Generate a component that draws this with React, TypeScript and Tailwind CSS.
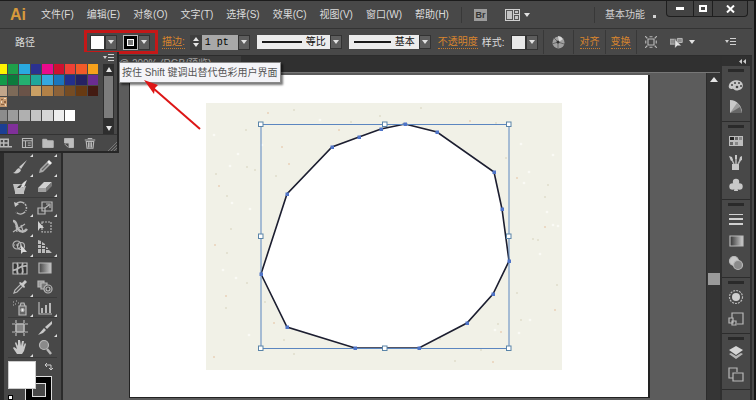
import React from "react";
import type { ReactNode } from "react";

const menus = [
  "文件(F)",
  "编辑(E)",
  "对象(O)",
  "文字(T)",
  "选择(S)",
  "效果(C)",
  "视图(V)",
  "窗口(W)",
  "帮助(H)",
];

const swatchRows = [
  ["#fff200", "#1fa04a", "#2aa9e0", "#2b3190", "#ea0a8c", "#cf1030", "#ef4136", "#f15a29", "#f7a11b"],
  ["#149a49", "#0d7a3c", "#25b070", "#1fa79b", "#35a8e0", "#1b75bc", "#232f8c", "#252262", "#6a2c91"],
  ["#c2a68a", "#7d6a58", "#6a5348", "#caa064", "#b28147", "#8c6239", "#754c24", "#683a12", "#431b12"],
];

const grays = ["#8c8c8c", "#9c9c9c", "#b0b0b0", "#c4c4c4", "#d6d6d6", "#eeeeee", "#ffffff"];

const Icon = ({ children, size = 16 }: { children?: ReactNode; size?: number }) => (
  <svg
    width={size}
    height={size}
    viewBox="0 0 16 16"
    fill="none"
    stroke="#b8b8b8"
    strokeWidth="1.2"
    aria-hidden="true"
  >
    {children}
  </svg>
);

const Caret = () => (
  <svg width="6" height="4" viewBox="0 0 6 4" fill="#e2e2e2" aria-hidden="true">
    <path d="M0 0h6L3 4z" />
  </svg>
);

const PanelMenu = () => (
  <svg width="11" height="8" viewBox="0 0 11 8" fill="#d0d0d0" aria-hidden="true">
    <path d="M0 2h4L2 5zM5 0h6v1H5zM5 3h6v1H5zM5 6h6v1H5z" />
  </svg>
);

const Separator = () => (
  <span className="h-6 w-px shrink-0 bg-[#383838]" />
);

type Tool = { name: string; more?: boolean; icon: ReactNode };

const toolGroups: Tool[][] = [
  [
    { name: "选择", icon: <path d="M4 2v11l3-3h5z" fill="#c2c2c2" stroke="none" /> },
    { name: "直接选择", more: true, icon: <path d="M4 2v11l3-3h5z" /> },
    { name: "魔棒", icon: <path d="M2 14L10 6M12 1v4M10 3h4" /> },
    { name: "套索", icon: <path d="M3 10c-3-8 12-9 11-3-1 4-8 5-11 3l1 4" /> },
  ],
  [
    { name: "钢笔", more: true, icon: <path d="M3 14l2-7 5-5 3 3-5 5zM3 14l5-5" /> },
    { name: "文字", more: true, icon: <path d="M3 5V3h10v2M8 3v10M6 13h4" /> },
    { name: "直线段", more: true, icon: <path d="M3 12L12 3" /> },
    { name: "矩形", more: true, icon: <path d="M3 3h10v8H3z" /> },
    {
      name: "画笔",
      more: true,
      icon: (
        <g fill="#c8c8c8" stroke="none">
          <path d="M15 1L9 10 7 8z" />
          <path d="M7 9l2 2c-1 3-4 4-8 3 3-1 3-4 6-5z" />
        </g>
      ),
    },
    {
      name: "铅笔",
      more: true,
      icon: (
        <g stroke="none">
          <path d="M2 14l1-4 7-7 3 3-7 7z" fill="#a8a8a8" />
          <path d="M10 3l2-2 3 3-2 2z" fill="#f0f0f0" />
          <path d="M5 11l6-6" stroke="#666" />
        </g>
      ),
    },
    {
      name: "斑点画笔",
      icon: (
        <g stroke="none">
          <path d="M1 5h8l-3 4h4l3-2h1l-2 6v2H3v-2z" fill="#c0c0c0" />
          <path d="M15 1l-3 7-3 1-3 1 2-3 4-4z" fill="#dedede" />
          <path d="M5 9c1-2 3-3 5-3l-2 3z" fill="#3c3c3c" />
        </g>
      ),
    },
    {
      name: "橡皮擦",
      more: true,
      icon: (
        <g stroke="none">
          <path d="M1 9l6-6h8l-6 6z" fill="#d0d0d0" />
          <path d="M1 9h8v4H1z" fill="#a0a0a0" />
          <path d="M9 9l6-6v4l-6 6z" fill="#787878" />
        </g>
      ),
    },
  ],
  [
    {
      name: "旋转",
      more: true,
      icon: (
        <g>
          <path d="M4 4a6 6 0 1 1 0 8" strokeDasharray="9 1 2 1 2 1 1 1" strokeWidth="1.5" />
          <path d="M2 2l1 5 4-3z" fill="#c8c8c8" stroke="none" />
        </g>
      ),
    },
    {
      name: "比例缩放",
      more: true,
      icon: (
        <g>
          <path d="M5 2h10v9H5zM1 8h7v6H1z" />
          <path d="M8 8l4-3M9 4h4v4" />
        </g>
      ),
    },
    {
      name: "宽度",
      more: true,
      icon: (
        <g>
          <path d="M1 2c4 0 3 5 5 8s6 4 9 0" strokeWidth="2.5" />
          <path d="M1 13l12-8M4 7l1 6M9 6l2 6" />
        </g>
      ),
    },
    {
      name: "自由变换",
      icon: (
        <g>
          <path d="M5 3h9v10H5z" strokeDasharray="2 1" />
          <path d="M1 2v10l2-3h4z" fill="#d2d2d2" stroke="none" />
        </g>
      ),
    },
    {
      name: "形状生成器",
      more: true,
      icon: (
        <g>
          <circle cx="5" cy="6" r="4" />
          <circle cx="9" cy="7" r="3.5" />
          <path d="M2 6h8" strokeDasharray="1 1" />
          <path d="M9 6v9l2-2h4z" fill="#d8d8d8" stroke="none" />
        </g>
      ),
    },
    {
      name: "透视网格",
      more: true,
      icon: (
        <g fill="#bcbcbc" stroke="none">
          <path d="M1 1l3 1v3H1zM1 6h3v3H1zM1 10h3v4H1zM5 3l3 2v1H5zM5 7h3v2H5zM5 10h3v4H5z" />
          <path d="M9 8l2 1v1H9zM9 11h3l3 3H9z" />
        </g>
      ),
    },
  ],
  [
    {
      name: "网格",
      icon: (
        <g>
          <path d="M1 3h14v11H1z" fill="#333" />
          <path d="M1 10c5 1 5-5 14-4M5 3c3 4-2 7 1 11M11 3c-3 4 2 7-1 11" strokeWidth="1.8" />
        </g>
      ),
    },
    {
      name: "渐变",
      icon: (
        <g>
          <defs>
            <linearGradient id="toolGradient">
              <stop offset="0" stopColor="#444" />
              <stop offset="1" stopColor="#c8c8c8" />
            </linearGradient>
          </defs>
          <path d="M2 3h12v10H2z" fill="url(#toolGradient)" />
        </g>
      ),
    },
    {
      name: "吸管",
      more: true,
      icon: (
        <g>
          <path d="M2 14l1-3 6-6 2 2-6 6z" />
          <path d="M8 3l2 1 3-3 2 2-3 3 1 2-1 1-5-5z" fill="#cacaca" stroke="none" />
        </g>
      ),
    },
    {
      name: "混合",
      icon: (
        <g>
          <path d="M1 2h6v6H1z" fill="#9a9a9a" />
          <path d="M4 4h6v6H4z" fill="#777" />
          <circle cx="11" cy="10" r="4" fill="#484848" />
          <circle cx="11" cy="10" r="2" />
        </g>
      ),
    },
  ],
  [
    {
      name: "符号喷枪",
      more: true,
      icon: (
        <g>
          <path d="M7 6h7v9H7zM8 6l1-3h3l1 3" fill="#666" />
          <circle cx="10.5" cy="10" r="1.5" fill="#eee" />
          <path d="M1 2h1M4 1h1M3 4h1M1 5h1M6 3h1" />
        </g>
      ),
    },
    {
      name: "柱形图",
      more: true,
      icon: (
        <g>
          <path d="M2 2v12h13" />
          <path d="M5 8v5M9 5v8M13 3v10" strokeWidth="2" />
        </g>
      ),
    },
  ],
  [
    {
      name: "画板",
      icon: (
        <g>
          <path d="M4 4h8v8H4z" fill="#858585" />
          <path d="M4 0v16M12 0v16M0 4h16M0 12h16" strokeDasharray="3 1 8 1" />
        </g>
      ),
    },
    {
      name: "切片",
      more: true,
      icon: (
        <g stroke="none" fill="#c8c8c8">
          <path d="M15 1v3l-5 5-2-2z" />
          <path d="M7 8l2 2-3 3-5 2z" />
        </g>
      ),
    },
    {
      name: "抓手",
      more: true,
      icon: (
        <path
          d="M5 15L1 9l1-1 3 2-2-6 1-1 2 4V1h2l1 6 1-5h2l-1 6 2-4 1 1-2 7-2 3z"
          fill="#c8c8c8"
          stroke="none"
        />
      ),
    },
    {
      name: "缩放",
      icon: (
        <g>
          <circle cx="7" cy="6" r="4.5" fill="#8a8a8a" />
          <path d="M10 10l4 5" strokeWidth="2.5" />
        </g>
      ),
    },
  ],
];

const dockGroups: { name: string; icon: ReactNode }[][] = [
  [
    {
      name: "颜色",
      icon: (
        <g stroke="none">
          <path d="M1 8c1-4 7-6 11-4 4 2 4 8-1 9-5 2-5-2-7-1-2 0-4-1-3-4z" fill="#c8c8c8" />
          <g fill="#444">
            <circle cx="4" cy="8" r="1" />
            <circle cx="7" cy="6" r="1" />
            <circle cx="11" cy="6" r="1" />
            <circle cx="13" cy="9" r="1" />
            <circle cx="9" cy="10" r="1.3" />
          </g>
        </g>
      ),
    },
    {
      name: "颜色参考",
      icon: (
        <g stroke="none">
          <path d="M2 1c7 0 12 6 12 13H2z" fill="#c8c8c8" />
          <path d="M2 14L9 4c3 2 5 6 5 10z" fill="#9a9a9a" />
          <path d="M2 14l10-6 2 6z" fill="#666" />
        </g>
      ),
    },
  ],
  [
    {
      name: "色板",
      icon: (
        <g stroke="none">
          <path d="M1 3h14v10H1z" fill="#bdbdbd" />
          <path d="M2 4h4v3H2z" fill="#222" />
          <path d="M7 4h3v3H7zM2 9h3v3H2z" fill="#666" />
          <path d="M11 4h3v3h-3zM7 9h3v3H7z" fill="#888" />
        </g>
      ),
    },
    {
      name: "画笔",
      icon: (
        <g>
          <path d="M4 9h7v6H4z" fill="#c8c8c8" stroke="none" />
          <path d="M6 9L3 3M8 9V2M10 9l3-5" strokeWidth="1.5" />
          <path d="M1 1l3 1 1 3-2 1zM7 0h2v4H7zM14 1v4l-3 1 1-4z" fill="#c8c8c8" stroke="none" />
        </g>
      ),
    },
    {
      name: "符号",
      icon: (
        <g fill="#c8c8c8" stroke="none">
          <circle cx="8" cy="5" r="3.2" />
          <circle cx="4.5" cy="9.5" r="3.2" />
          <circle cx="11.5" cy="9.5" r="3.2" />
          <path d="M7 7h2l1 7H6z" />
        </g>
      ),
    },
  ],
  [
    {
      name: "描边",
      icon: (
        <g fill="#d0d0d0" stroke="none">
          <path d="M1 3h14v1H1zM1 7h14v2H1zM1 12h14v2H1z" />
        </g>
      ),
    },
    {
      name: "渐变",
      icon: (
        <g>
          <defs>
            <linearGradient id="dockGradient">
              <stop offset="0" stopColor="#333" />
              <stop offset="1" stopColor="#d0d0d0" />
            </linearGradient>
          </defs>
          <path d="M2 3h13v10H2z" fill="url(#dockGradient)" />
        </g>
      ),
    },
    {
      name: "透明度",
      icon: (
        <g>
          <circle cx="6" cy="6" r="4.5" fill="#c8c8c8" />
          <circle cx="10" cy="10" r="4.5" fill="#8a8a8a" />
        </g>
      ),
    },
  ],
  [
    {
      name: "外观",
      icon: (
        <g>
          <circle cx="8" cy="8" r="4" fill="#d0d0d0" stroke="none" />
          <circle cx="8" cy="8" r="6.5" strokeDasharray="2 1" />
        </g>
      ),
    },
    {
      name: "图形样式",
      icon: (
        <g>
          <path d="M4 7V2h11v11H9" />
          <path d="M1 7h4v5H1zM4 10h4v4H4z" />
        </g>
      ),
    },
  ],
  [
    {
      name: "图层",
      icon: (
        <g fill="#d6d6d6" stroke="none">
          <path d="M8 1l7 4-7 5-7-5z" />
          <path d="M1 9l2-1 5 3 5-3 2 1-7 5z" fill="#b5b5b5" />
        </g>
      ),
    },
    {
      name: "画板",
      icon: (
        <g>
          <path d="M5 11H1V1h8v4" />
          <path d="M5 6h10v8H5z" />
        </g>
      ),
    },
  ],
];

const outline = [
  [405, 124], [437, 132], [494, 172], [502, 209], [509, 261],
  [493, 294], [467, 323], [419, 348], [355, 348], [287, 327],
  [261, 274], [287, 194], [332, 147], [359, 137], [381, 129],
];

const handles = [
  [261, 124], [385, 124], [509, 124], [261, 236],
  [509, 236], [261, 348], [385, 348], [509, 348],
];

const darkSpecks = [
  [268, 113], [294, 110], [246, 130], [282, 147], [247, 167], [255, 170], [289, 164],
  [276, 176], [216, 174], [219, 186], [227, 196], [231, 229], [339, 130], [380, 116],
  [421, 108], [470, 121], [496, 123], [506, 158], [517, 178], [548, 185], [545, 197],
  [545, 227], [533, 239], [538, 240], [215, 245], [227, 253], [247, 283], [226, 296],
  [226, 308], [265, 302], [274, 323], [284, 340], [294, 354], [214, 357], [517, 293],
  [557, 285], [555, 310], [521, 320], [498, 324], [501, 332], [481, 350], [455, 361],
  [493, 362], [440, 339], [351, 122],
];

const lightSpecks = [
  [214, 135], [230, 166], [262, 145], [223, 270], [236, 278], [238, 154], [250, 209],
  [521, 144], [553, 155], [529, 172], [524, 183], [547, 212], [553, 225], [558, 226],
  [495, 330], [519, 333], [540, 254], [232, 203], [249, 335], [320, 120], [530, 320],
];

const Artwork = () => (
  <svg className="block shrink-0" width="356" height="267" viewBox="206 103 356 267" role="img" aria-label="路径">
    <rect x="206" y="103" width="356" height="267" fill="#f1f1e7" />
    {lightSpecks.map(([x, y]) => (
      <circle key={`${x}-${y}`} cx={x} cy={y} r="1.3" fill="#fafaf5" />
    ))}
    {darkSpecks.map(([x, y], i) => (
      <circle key={`${x}-${y}`} cx={x} cy={y} r="1" fill={i % 3 ? "#dfdccb" : "#e8d0b8"} />
    ))}
    <polygon
      points={outline.map((p) => p.join(",")).join(" ")}
      fill="#ffffff"
      stroke="#1c1e30"
      strokeWidth="1.6"
    />
    <rect x="261" y="124.5" width="248" height="224" fill="none" stroke="#5b86c0" />
    {outline.map(([x, y]) => (
      <rect key={`${x}-${y}`} x={x - 1.5} y={y - 1.5} width="3.5" height="3.5" fill="#4f74c8" />
    ))}
    {handles.map(([x, y]) => (
      <rect key={`${x}-${y}`} x={x - 2.5} y={y - 2} width="4.5" height="4.5" fill="#fff" stroke="#5a84a8" />
    ))}
  </svg>
);

const TitleBar = () => (
  <header className="flex h-7 shrink-0 items-center border-t border-[#1c1c1c] pl-[10px]">
    <span className="w-[31px] font-['Liberation_Sans'] text-base font-bold text-[#d79a3c]">Ai</span>
    <nav className="flex gap-[13px] text-[#dcdcdc]">
      {menus.map((menu) => (
        <button key={menu} type="button">
          {menu}
        </button>
      ))}
    </nav>
    <span className="ml-3 h-4 w-px bg-[#383838]" />
    <button
      type="button"
      className="ml-3 h-3 w-[13px] bg-[#9c9c9c] font-['Liberation_Sans'] text-[9px] leading-3 font-bold text-[#333]"
    >
      Br
    </button>
    <button type="button" aria-label="排列文档" className="ml-[18px] flex items-center gap-1">
      <svg width="15" height="12" viewBox="0 0 15 12" fill="#d0d0d0" aria-hidden="true">
        <path d="M0 0h15v12H0z" />
        <path d="M1 1h7v10H1zM9 1h5v4H9zM9 6h5v5H9z" fill="#555" />
        <path d="M2 2h5v8H2zM10 2h3v2h-3zM10 7h3v3h-3z" fill="#c4c4c4" />
      </svg>
      <Caret />
    </button>
    <div className="ml-auto flex h-full items-center">
      <span className="h-4 w-px bg-[#383838]" />
      <button type="button" className="ml-[10px] text-[#d2d2d2]">
        基本功能
      </button>
      <span className="mt-1 ml-2 size-[3px] bg-[#d2d2d2]" />
    </div>
    <div className="mr-[6px] ml-[10px] flex h-4 self-start rounded-b-sm border border-t-0 border-[#1e1e1e] bg-[#434343]">
      <button type="button" aria-label="最小化" className="flex w-[26px] items-center justify-center">
        <span className="h-[3px] w-2 bg-white" />
      </button>
      <button
        type="button"
        aria-label="最大化"
        className="flex w-[19px] items-center justify-center border-l border-[#1e1e1e]"
      >
        <span className="h-[7px] w-2 border-2 border-white" />
      </button>
      <button
        type="button"
        aria-label="关闭"
        className="flex w-[35px] items-center justify-center border-l border-[#1e1e1e]"
      >
        <svg width="9" height="8" viewBox="0 0 9 8" stroke="#fff" strokeWidth="2" aria-hidden="true">
          <path d="M1 0.5l7 7M8 0.5l-7 7" />
        </svg>
      </button>
    </div>
  </header>
);

const DropButton = ({ label }: { label: string }) => (
  <button
    type="button"
    aria-label={label}
    className="flex h-[15px] w-3 items-center justify-center border border-[#333] bg-[#5e5e5e]"
  >
    <Caret />
  </button>
);

const LineSelect = ({ label, value, width }: { label: string; value: string; width: string }) => (
  <label className="flex items-center">
    <span className={`flex h-[14px] items-center bg-[#ececec] pl-[5px] ${width}`}>
      <span className="h-[2px] flex-1 bg-[#1a1a1a]" />
      <select aria-label={label} className="ml-1 w-6 appearance-none leading-[14px] text-[#111] outline-none">
        <option>{value}</option>
      </select>
    </span>
    <span className="flex h-[14px] w-3 items-center justify-center border border-[#333] bg-[#5e5e5e]">
      <Caret />
    </span>
  </label>
);

const ControlBar = () => (
  <div className="mr-0.5 flex h-7 shrink-0 items-center border-y border-t-[#333] border-b-[#2c2c2c] pl-[15px] text-[#dcdcdc]">
    <span className="w-[69px]">路径</span>
    <div className="flex h-6 w-[74px] items-center gap-[6px] border-[3px] border-[#c41818] pl-[3px]">
      <div className="flex">
        <button type="button" aria-label="填色" className="h-[15px] w-[15px] border border-[#333] bg-white" />
        <DropButton label="填色色板" />
      </div>
      <div className="flex">
        <button
          type="button"
          aria-label="描边颜色"
          className="flex h-[15px] w-[15px] items-center justify-center border border-[#bbb] bg-black"
        >
          <span className="size-[7px] border border-white bg-[#777]" />
        </button>
        <DropButton label="描边色板" />
      </div>
    </div>
    <label htmlFor="weight" className="ml-1 border-b border-dotted border-[#c67a2c] text-[#d8852e]">
      描边:
    </label>
    <div className="ml-[5px] flex h-[15px]">
      <button type="button" aria-label="调整粗细" className="flex w-3 items-center justify-center bg-[#3e3e3e]">
        <svg width="6" height="10" viewBox="0 0 6 10" fill="#e2e2e2" aria-hidden="true">
          <path d="M0 4h6L3 0zM0 6h6L3 10z" />
        </svg>
      </button>
      <input
        id="weight"
        defaultValue="1 pt"
        className="w-9 bg-[#a8a8a8] pl-[3px] font-['Liberation_Mono'] text-black outline-none"
      />
      <DropButton label="描边粗细" />
    </div>
    <div className="ml-[7px] flex gap-[7px]">
      <LineSelect label="变量宽度配置文件" value="等比" width="w-[73px]" />
      <LineSelect label="画笔定义" value="基本" width="w-[70px]" />
    </div>
    <a href="#opacity" className="ml-[7px] border-b border-dotted border-[#c67a2c] text-[#d8852e]">
      不透明度
    </a>
    <span className="ml-1">样式:</span>
    <div className="ml-[6px] flex">
      <button type="button" aria-label="图形样式" className="h-[15px] w-[15px] border border-[#333] bg-[#e8e8e8]" />
      <DropButton label="图形样式列表" />
    </div>
    <div className="ml-[5px] flex items-center gap-2">
      <Separator />
      <button type="button" aria-label="重新着色图稿">
        <svg className="block" width="13" height="13" viewBox="0 0 13 13" aria-hidden="true">
          <circle cx="6.5" cy="6.5" r="6" fill="#a0a0a0" />
          <path d="M6 6L2 2M6 6l5-4M6 6v6M6 6l6 2M6 6L0 8" stroke="#666" />
          <path d="M6 0a6 6 0 0 1 5 3L7 6z" fill="#d8d8d8" />
          <circle cx="6" cy="6" r="1.5" fill="#333" />
        </svg>
      </button>
      <Separator />
    </div>
    <div className="ml-[6px] flex items-center gap-[5px]">
      <a href="#align" className="border-b border-dotted border-[#c67a2c] text-[#d8852e]">
        对齐
      </a>
      <Separator />
      <a href="#transform" className="border-b border-dotted border-[#c67a2c] text-[#d8852e]">
        变换
      </a>
      <Separator />
    </div>
    <div className="ml-2 flex items-center gap-[13px]">
      <button type="button" aria-label="隔离选中的对象">
        <Icon size={12}>
          <path d="M4 4h8v8H4zM0 0l3 3M16 0l-3 3M0 16l3-3M16 16l-3-3M6 1h4M6 15h4M1 6v4M15 6v4" strokeWidth="1.5" />
        </Icon>
      </button>
      <button type="button" aria-label="选择类似的对象" className="flex items-center gap-[6px]">
        <Icon size={13}>
          <path d="M0 4h7v6H0zM9 3h6v5H9z" fill="#8c8c8c" />
          <path d="M6 4v11l3-3h5z" fill="#e4e4e4" stroke="#444" strokeWidth="0.5" />
        </Icon>
        <Caret />
      </button>
    </div>
    <button type="button" aria-label="面板菜单" className="mr-4 ml-auto">
      <PanelMenu />
    </button>
  </div>
);

const Toolbox = () => (
  <aside className="w-[63px] shrink-0 overflow-hidden border-r-2 border-l-4 border-[#2b2b2b] bg-[#484848] px-1">
    <div className="h-[22px]" />
    {toolGroups.map((group, i) => (
      <div key={i} className="grid grid-cols-2 border-b border-[#3a3a3a]">
        {group.map((tool, n) => (
          <button
            key={tool.name}
            type="button"
            aria-label={tool.name}
            className={`relative flex items-center justify-center ${n > 1 ? "h-5" : "h-[19px]"}`}
          >
            <Icon>{tool.icon}</Icon>
            {tool.more && (
              <svg className="absolute right-0 bottom-0" width="3" height="3" fill="#ddd" aria-hidden="true">
                <path d="M3 0v3H0z" />
              </svg>
            )}
          </button>
        ))}
      </div>
    ))}
    <div className="relative h-12 pt-[3px]">
      <div className="absolute top-[18px] left-[17px] flex h-[27px] w-[27px] items-center justify-center border border-[#ddd] bg-black">
        <span className="size-[14px] border border-[#ddd] bg-[#484848]" />
      </div>
      <div className="relative h-[28px] w-[28px] border border-[#ccc] bg-white" />
      <svg
        className="absolute top-1 right-1"
        width="9"
        height="9"
        fill="none"
        stroke="#ccc"
        aria-hidden="true"
      >
        <path d="M1 3h6v5M3 1L1 3l2 2M5 6l2 2 2-2" />
      </svg>
      <span className="absolute top-[37px] left-0 size-[5px] border border-black bg-white" />
    </div>
  </aside>
);

const Dock = () => (
  <aside className="mr-0.5 w-8 shrink-0 border-x-2 border-[#2f2f2f] bg-[#484848]">
    <div className="flex h-[10px] items-center justify-end bg-[#303030] pr-1">
      <svg width="7" height="5" fill="#ccc" aria-hidden="true">
        <path d="M3 0v5L0 2.5zM7 0v5L4 2.5z" />
      </svg>
    </div>
    {dockGroups.map((group, i) => (
      <div key={i} className="flex flex-col items-center border-b border-[#2c2c2c] pb-[3px]">
        <span className="mt-[3px] mb-[2px] h-[3px] w-4 bg-[#2a2a2a]" />
        {group.map((item) => (
          <button key={item.name} type="button" aria-label={item.name} className="flex h-[22px] items-center">
            <Icon>{item.icon}</Icon>
          </button>
        ))}
      </div>
    ))}
  </aside>
);

const Document = () => (
  <main className="flex min-w-0 flex-1 flex-col bg-[#5c5c5c]">
    <div className="h-[17px] shrink-0 border-b border-[#777] bg-[#303030]">
      <div className="h-4 w-[178px] truncate bg-[#3c3c3c] pl-14 leading-4 text-[#a0a0a0]">@ 200% (RGB/预览)</div>
    </div>
    <div className="flex min-h-0 flex-1">
      <div className="flex min-w-0 flex-1 pt-[2px] pr-14 pb-[2px] pl-[66px]">
        <div className="flex-1 overflow-hidden border-r-2 border-b border-l border-[#222] bg-white pt-7 pl-[76px]">
          <Artwork />
        </div>
      </div>
      <div className="flex w-[14px] shrink-0 flex-col items-center border-l border-[#2c2c2c] bg-[#353535] pt-1">
        <button type="button" aria-label="向上滚动">
          <svg className="block" width="8" height="5" viewBox="0 0 8 5" fill="#e6e6e6" aria-hidden="true">
            <path d="M0 5h8L4 0z" />
          </svg>
        </button>
        <div className="flex-[190]" />
        <div className="h-3 w-3 bg-[#9a9a9a]" />
        <div className="flex-[115]" />
      </div>
    </div>
  </main>
);

const SwatchPopup = () => (
  <div className="absolute -top-1 left-0 z-10 w-[119px] border-r-2 border-b-2 border-[#262626] bg-[#484848]">
    <div className="flex h-3 items-center justify-end pr-[3px]">
      <PanelMenu />
    </div>
    <div className="flex justify-between border-b border-[#333] pr-[3px]">
      <div className="flex w-[98px] flex-col gap-[3px]">
        <div className="grid grid-cols-[7px_repeat(8,1fr)] gap-px">
          {swatchRows.flat().map((color) => (
            <button
              key={color}
              type="button"
              aria-label={color}
              className="h-[10px]"
              style={{ backgroundColor: color }}
            />
          ))}
          <button type="button" aria-label="图案" className="h-[10px]">
            <svg className="block" width="7" height="10" fill="#c69a70" aria-hidden="true">
              <path d="M0 0h7v10H0z" />
              <path d="M1 2h2v1H1zM4 4h2v2H4zM1 7h3v1H1z" fill="#8b6242" />
              <path d="M4 1h2v1H4zM1 4h1v2H1zM5 7h1v2H5z" fill="#efd9be" />
            </svg>
          </button>
        </div>
        <div className="grid grid-cols-[7px_repeat(8,1fr)] gap-px">
          {grays.map((color) => (
            <button
              key={color}
              type="button"
              aria-label={color}
              className="h-[11px]"
              style={{ backgroundColor: color }}
            />
          ))}
        </div>
        <div className="grid grid-cols-[7px_repeat(8,1fr)] gap-px">
          <button type="button" aria-label="蓝色" className="h-[10px] bg-[#1c3f94]" />
          <button type="button" aria-label="紫色" className="h-[10px] bg-[#80309a]" />
        </div>
      </div>
      <div className="flex w-[11px] flex-col items-center bg-[#2e2e2e]">
        <svg className="mt-[3px] mb-1 block" width="6" height="5" fill="#e6e6e6" aria-hidden="true">
          <path d="M0 5h6L3 0z" />
        </svg>
        <div className="w-[9px] flex-1 bg-[#7c7c7c]" />
        <svg className="mt-2 mb-[3px] block" width="6" height="5" fill="#e6e6e6" aria-hidden="true">
          <path d="M0 0h6L3 5z" />
        </svg>
      </div>
    </div>
    <div className="flex h-4 items-center gap-[9px]">
      <button type="button" aria-label="色板库">
        <Icon size={12}>
          <path d="M0 3h11v10H0zM5 3v10M0 8h11" strokeWidth="2" />
          <path d="M12 13h4" strokeWidth="2" />
        </Icon>
      </button>
      <button type="button" aria-label="显示色板类型">
        <Icon size={12}>
          <path d="M2 2h13v12H2zM2 5h13M6 5v9M9 8h4M9 11h4" strokeWidth="1.5" />
        </Icon>
      </button>
      <button type="button" aria-label="新建颜色组">
        <Icon size={12}>
          <path d="M1 3h5l2 2h7v9H1z" fill="#bdbdbd" />
        </Icon>
      </button>
      <button type="button" aria-label="新建色板">
        <Icon size={12}>
          <path d="M2 2h12v12H8V8H2z" fill="#bdbdbd" />
          <path d="M3 9v1l4 4" />
        </Icon>
      </button>
      <button type="button" aria-label="删除色板">
        <Icon size={12}>
          <path d="M1 4h14M5 2h6M3 6h10l-1 9H4zM6 7v7M8 7v7M10 7v7" strokeWidth="1.5" />
        </Icon>
      </button>
      <svg className="ml-auto self-end" width="9" height="9" stroke="#777" aria-hidden="true">
        <path d="M0 9L9 0M3 9l6-6M6 9l3-3" />
      </svg>
    </div>
  </div>
);

export default function App() {
  return (
    <div className="flex h-screen flex-col overflow-hidden border-r-2 border-[#151515] bg-[#484848] font-['Liberation_Sans','Noto_Sans_CJK_SC',sans-serif] text-[10px] leading-[13px] whitespace-nowrap">
      <TitleBar />
      <ControlBar />
      <div className="relative flex min-h-0 flex-1">
        <Toolbox />
        <Document />
        <Dock />
        <SwatchPopup />
        <div
          role="tooltip"
          className="absolute top-[6px] left-[119px] z-20 border border-[#888] bg-[#f4f4f8] px-[2px] py-[2px] leading-[15px] text-[#555] shadow-[2px_2px_2px_#0008]"
        >
          按住 Shift 键调出替代色彩用户界面
        </div>
        <svg
          className="absolute top-6 left-[143px] z-20"
          width="60"
          height="52"
          viewBox="143 80 60 52"
          aria-hidden="true"
        >
          <path d="M153 88l47 41" stroke="#dd1616" strokeWidth="2" />
          <path d="M144 80l14 5-3 3-1 6z" fill="#dd1616" />
        </svg>
      </div>
    </div>
  );
}
